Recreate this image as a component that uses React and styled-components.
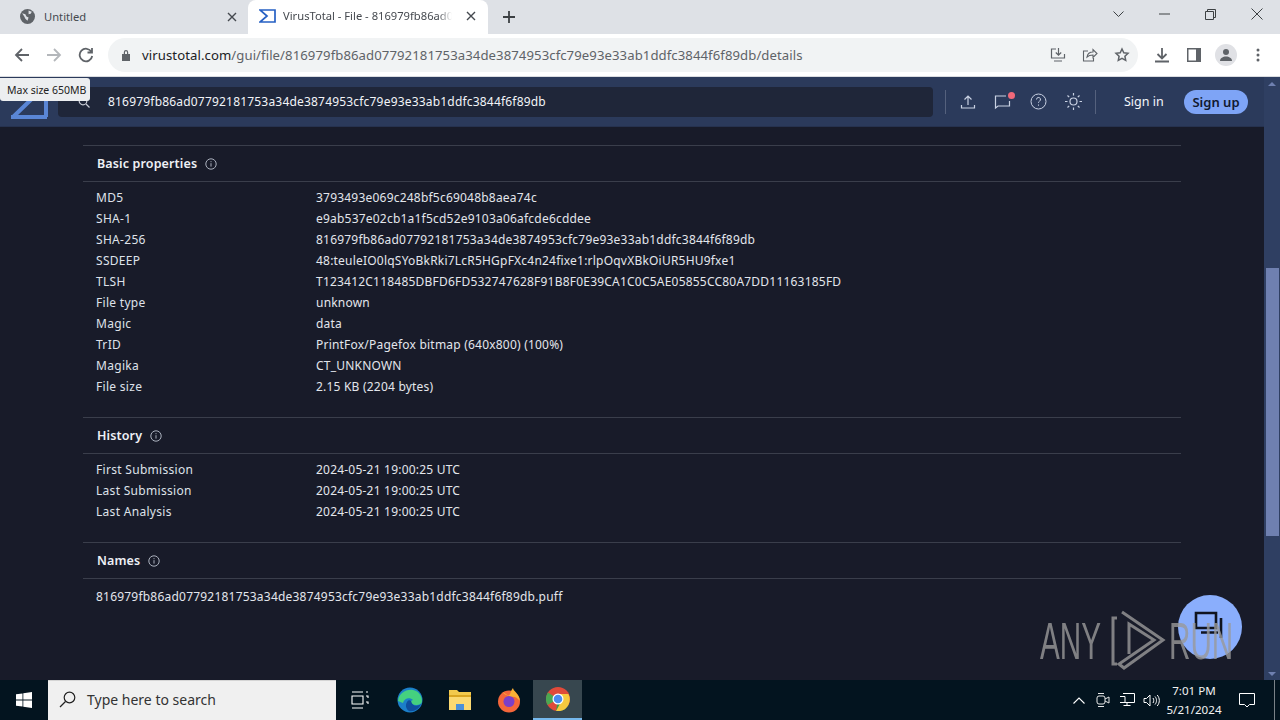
import React from 'react';
import styled, { createGlobalStyle } from 'styled-components';

const Global = createGlobalStyle`
  html, body { margin: 0; padding: 0; width: 1280px; height: 720px; overflow: hidden; background: #181b29; }
  * { box-sizing: border-box; }
`;
const Screen = styled.div`
  position: relative; width: 1280px; height: 720px; display: flex; flex-direction: column; overflow: hidden;
  font-family: "Noto Sans", sans-serif;
`;
const TabStrip = styled.div`
  height: 34px; background: #dee1e6; display: flex; align-items: flex-end; padding-left: 8px; flex: none;
`;
const Tab = styled.div`
  width: ${p => p.$w}px; height: ${p => p.$active ? 34 : 32}px; display: flex; align-items: center; gap: ${p => p.$gap}px; padding: 0 ${p => p.$pr}px 3px ${p => p.$pl}px;
  background: ${p => p.$active ? '#fff' : 'transparent'}; border-radius: 8px 8px 0 0; color: #45494f; font-size: 11.2px;
  margin-right: ${p => p.$mr || 0}px;
`;
const TabTitle = styled.span`
  flex: 1; white-space: nowrap; overflow: hidden;
  ${p => p.$fade && `
    -webkit-mask-image: linear-gradient(90deg, #000 88%, transparent 96%);
    mask-image: linear-gradient(90deg, #000 88%, transparent 96%);
  `}
`;
const StripSpacer = styled.div`flex: 1;`;
const WinControls = styled.div`
  display: flex; align-items: center; height: 34px; color: #3c4043; padding-right: 17px; gap: 35px; padding-bottom: 6px;
`;
const NewTab = styled.div`
  height: 32px; display: flex; align-items: center; margin-left: 14px; padding-bottom: 2px; color: #3c4043;
`;
const Toolbar = styled.div`
  height: 43px; background: #fff; display: flex; align-items: center; padding: 0 0 0 12px; flex: none; border-bottom: 1px solid #dadce0;
`;
const NavBtn = styled.div`
  width: ${p => p.$w || 32}px; display: flex; justify-content: center; align-items: center; color: ${p => p.$c || '#5f6368'}; flex: none;
`;
const Omnibox = styled.div`
  width: 1030px; margin-left: 12px; height: 34px; border-radius: 17px; background: #f1f3f4; display: flex; align-items: center; padding: 0 8px 0 13px; font-size: 13.15px; color: #5f6368; white-space: nowrap; flex: none;
`;
const Url = styled.span`
  flex: 1; margin-left: 11px; letter-spacing: .08px;
  b { font-weight: 400; color: #202124; }
`;
const OmniIcons = styled.div`display: flex; gap: 16px; align-items: center; color: #5f6368;`;
const ToolIcons = styled.div`display: flex; align-items: center; margin-left: 8px;`;
const Avatar = styled.div`
  width: 22px; height: 22px; border-radius: 50%; background: #e0e1e5; display: flex; align-items: center; justify-content: center; overflow: hidden;
`;

const Page = styled.div`flex: 1; display: flex; min-height: 0; position: relative;`;
const PageCol = styled.div`flex: 1; display: flex; flex-direction: column; min-width: 0;`;
const Header = styled.div`
  height: 50px; background: #2b3a5b; display: flex; align-items: center; padding: 0 15px 0 58px; flex: none; border-bottom: 1px solid #26324f;
`;
const SearchBox = styled.div`
  width: 875px; flex: none; height: 30px; background: #1f2639; border-radius: 4px; display: flex; align-items: center; padding-left: 50px; color: #f2f4f8; font-size: 12px; letter-spacing: .19px; position: relative;
`;
const SearchGlass = styled.svg`position: absolute; left: 20px; top: 9px;`;
const HDivider = styled.div`width: 1px; height: 24px; background: #55617d; flex: none; margin: ${p => p.$m};`;
const HIcons = styled.div`display: flex; align-items: center; gap: 13px; flex: none;`;
const HIcon = styled.div`width: 22px; height: 22px; display: flex; align-items: center; justify-content: center; color: #c9d1e3; position: relative;`;
const Dot = styled.span`position: absolute; top: 1px; right: -1px; width: 7px; height: 7px; border-radius: 50%; background: #f0697a;`;
const SignIn = styled.div`color: #f4f6fb; font-size: 12.5px; width: 38px; margin-right: 22px; white-space: nowrap; flex: none;`;
const SignUp = styled.div`
  width: 64px; height: 24px; border-radius: 12px; background: #7ea4f6; color: #111a30; font-size: 13px; font-weight: 600; display: flex; align-items: center; justify-content: center; flex: none;
`;
const Main = styled.div`
  flex: 1; background: #181b29; padding: 18px 83px 0; border-right: 0; display: flex; flex-direction: column; min-height: 0;
`;
const Section = styled.section`
  width: 1098px; border-top: 1px solid #3a3e4b; margin-bottom: ${p => p.$mb}px;
`;
const SectionHead = styled.div`
  height: 36px; display: flex; align-items: center; padding-left: 14px; gap: 8px; border-bottom: 1px solid #3a3e4b; color: #eef0f5; font-size: 12.5px; font-weight: 600; letter-spacing: .13px;
`;
const Rows = styled.div`padding-top: ${p => p.$pt || 5}px;`;
const Row = styled.div`
  height: 21px; display: flex; align-items: center; padding-left: 13px; font-size: 12px; color: #e3e6ec; white-space: nowrap; letter-spacing: .21px;
`;
const Key = styled.span`width: 220px; flex: none; color: #dfe2e9; letter-spacing: .3px;`;
const Scrollbar = styled.div`
  width: 16px; background: #2f3f62; flex: none; display: flex; flex-direction: column; align-items: center; justify-content: space-between; padding: 5px 0 4px; position: relative;
`;
const Thumb = styled.div`
  position: absolute; top: 191px; left: 2px; width: 13px; height: 268px; background: #6f80b0;
`;
const Arrow = styled.div`
  width: 0; height: 0; border-left: 4px solid transparent; border-right: 4px solid transparent;
  ${p => p.$up ? 'border-bottom: 4px solid #6f80b0;' : 'border-top: 4px solid #6f80b0;'}
`;
const Taskbar = styled.div`
  height: 40px; background: #03141f; display: flex; align-items: center; flex: none; color: #fff;
`;
const StartBtn = styled.div`width: 48px; display: flex; justify-content: center; align-items: center;`;
const SearchBar = styled.div`
  width: 288px; height: 40px; background: #f0f0f0; border-top: 1px solid #d4d4d4; display: flex; align-items: center; padding: 0 0 2px 11px; gap: 11px; color: #333; font-size: 14px;
`;
const TaskIcons = styled.div`display: flex; align-items: center; height: 40px;`;
const TaskIcon = styled.div`
  width: ${p => p.$w || 49}px; height: 40px; display: flex; align-items: center; justify-content: center;
  ${p => p.$active && 'background: #37474f; border-bottom: 2px solid #76b9ed;'}
`;
const Tray = styled.div`margin-left: auto; margin-right: 5px; display: flex; align-items: center; height: 40px; color: #fff;`;
const TrayIcon = styled.div`width: ${p => p.$w || 24}px; display: flex; justify-content: center;`;
const Clock = styled.div`
  width: 62px; text-align: center; font-size: 11.6px; line-height: 19px; color: #f2f2f2; white-space: nowrap;
  display: flex; flex-direction: column; align-items: center;
`;
const Notif = styled.div`width: 50px; display: flex; justify-content: center; padding-right: 6px; border-right: 1px solid #7a8288; height: 40px; align-items: center;`;

const Tooltip = styled.div`
  position: absolute; left: 0; top: 78px; width: 90px; height: 23px; background: #eceef0; border-radius: 0 3px 3px 3px; color: #222; font-size: 10.5px; display: flex; align-items: center; padding-left: 7px; white-space: nowrap; z-index: 5;
`;
const Logo = styled.svg`position: absolute; left: 10px; top: 88px;`;
const ChatFab = styled.div`
  position: absolute; left: 1178px; top: 595px; width: 64px; height: 64px; border-radius: 50%; background: #8aaefc; display: flex; align-items: center; justify-content: center; color: #10141f;
`;
const Watermark = styled.div`
  position: absolute; left: 1040px; top: 608px; height: 66px; display: flex; align-items: center; color: #9a9a9a; opacity: .8; font-family: "Liberation Sans", sans-serif; font-size: 52px; line-height: 66px; z-index: 6;
`;
const WmText = styled.span`display: inline-block; transform: scaleX(.57); transform-origin: left center; width: ${p => p.$w}px; white-space: nowrap; margin-right: ${p => p.$mr || 0}px;`;

const Info = () => (
  <svg width="12" height="12" viewBox="0 0 12 12" fill="none" stroke="#aab0bd" strokeWidth="1"><circle cx="6" cy="6" r="5.2"/><path d="M6 5.2v3.4M6 3.2v1"/></svg>
);

const VTMark = () => (
  <svg width="17" height="14" viewBox="0 0 17 14" fill="none" stroke="#2660c4" strokeWidth="1.7"><path d="M1 1h15v12H1l7-6z"/></svg>
);

const basic = [
  ['MD5', '3793493e069c248bf5c69048b8aea74c'],
  ['SHA-1', 'e9ab537e02cb1a1f5cd52e9103a06afcde6cddee'],
  ['SHA-256', '816979fb86ad07792181753a34de3874953cfc79e93e33ab1ddfc3844f6f89db'],
  ['SSDEEP', '48:teuleIO0lqSYoBkRki7LcR5HGpFXc4n24fixe1:rlpOqvXBkOiUR5HU9fxe1'],
  ['TLSH', 'T123412C118485DBFD6FD532747628F91B8F0E39CA1C0C5AE05855CC80A7DD11163185FD'],
  ['File type', 'unknown'],
  ['Magic', 'data'],
  ['TrID', 'PrintFox/Pagefox bitmap (640x800) (100%)'],
  ['Magika', 'CT_UNKNOWN'],
  ['File size', '2.15 KB (2204 bytes)'],
];
const history = [
  ['First Submission', '2024-05-21 19:00:25 UTC'],
  ['Last Submission', '2024-05-21 19:00:25 UTC'],
  ['Last Analysis', '2024-05-21 19:00:25 UTC'],
];
const KV = ({ items }) => (
  <Rows>{items.map(([k, v]) => <Row key={k}><Key>{k}</Key><span>{v}</span></Row>)}</Rows>
);

export default function App() {
  return (
    <Screen>
      <Global />
      <TabStrip>
        <Tab $w={240} $mr={0} $gap={9} $pl={12} $pr={11}>
          <svg width="15" height="15" viewBox="0 0 14 14"><circle cx="7" cy="7" r="7" fill="#5f6368"/><path d="M2 4l3 1 1 2 2 1-1 3-2-2-1-2zM8 1.500l3 1-1 2-2 .5z" fill="#dee1e6"/></svg>
          <TabTitle>Untitled</TabTitle>
          <svg width="10" height="10" viewBox="0 0 10 10" stroke="#45494f" strokeWidth="1.4"><path d="M1 1l8 8M9 1l-8 8"/></svg>
        </Tab>
        <Tab $w={240} $active $gap={7} $pl={11} $pr={12}>
          <VTMark />
          <TabTitle $fade>VirusTotal - File - 816979fb86ad0</TabTitle>
          <svg width="10" height="10" viewBox="0 0 10 10" stroke="#45494f" strokeWidth="1.4"><path d="M1 1l8 8M9 1l-8 8"/></svg>
        </Tab>
        <NewTab>
          <svg width="14" height="14" viewBox="0 0 14 14" stroke="#3c4043" strokeWidth="1.8"><path d="M7 1v12M1 7h12"/></svg>
        </NewTab>
        <StripSpacer />
        <WinControls>
          <svg width="11" height="7" viewBox="0 0 11 7" fill="none" stroke="#3c4043"><path d="M.5.5l5 5 5-5"/></svg>
          <svg width="11" height="2" viewBox="0 0 11 2" stroke="#3c4043"><path d="M0 1h11"/></svg>
          <svg width="11" height="11" viewBox="0 0 11 11" fill="none" stroke="#3c4043"><path d="M.5 2.500h8v8h-8zM2.500 2.500v-2h8v8h-2"/></svg>
          <svg width="12" height="12" viewBox="0 0 12 12" stroke="#3c4043"><path d="M.5.5l11 11M11.500.5l-11 11"/></svg>
        </WinControls>
      </TabStrip>
      <Toolbar>
        <NavBtn $w={20}>
          <svg width="16" height="16" viewBox="0 0 16 16" fill="none" stroke="#5f6368" strokeWidth="1.8"><path d="M15 8H2M8 2L2 8l6 6"/></svg>
        </NavBtn>
        <NavBtn $w={44}>
          <svg width="16" height="16" viewBox="0 0 16 16" fill="none" stroke="#b4b7bb" strokeWidth="1.8"><path d="M1 8h13M8 2l6 6-6 6"/></svg>
        </NavBtn>
        <NavBtn $w={20}>
          <svg width="16" height="16" viewBox="0 0 16 16" fill="none" stroke="#5f6368" strokeWidth="1.8"><path d="M13.500 5A6.300 6.300 0 1 0 14.200 9M14 1v4.500H9.500"/></svg>
        </NavBtn>
        <Omnibox>
          <svg width="10" height="12" viewBox="0 0 10 12" fill="#5f6368"><path d="M1 5h8v7H1zM2.800 5V3.200a2.200 2.200 0 0 1 4.400 0V5H6V3.200a1 1 0 0 0-2 0V5z"/></svg>
          <Url><b>virustotal.com</b>/gui/file/816979fb86ad07792181753a34de3874953cfc79e93e33ab1ddfc3844f6f89db/details</Url>
          <OmniIcons>
            <svg width="16" height="16" viewBox="0 0 16 16" fill="none" stroke="#5f6368" strokeWidth="1.2"><path d="M6 2H1.500v9h13V7M8.500 1v7M5.800 5.500l2.700 2.700 2.700-2.700M4 14h8"/></svg>
            <svg width="16" height="16" viewBox="0 0 16 16" fill="none" stroke="#5f6368" strokeWidth="1.1"><path d="M6 4H1.500v10h10v-3M5 10c.5-3 3-5 6-5V2.500l4 4-4 4V8c-2.500 0-4.500.5-6 2z"/></svg>
            <svg width="16" height="16" viewBox="0 0 16 16" fill="none" stroke="#5f6368" strokeWidth="1.5"><path d="M8 2l1.800 3.800 4.200.5-3.100 2.900.8 4.100L8 11.300l-3.700 2 .8-4.100L2 6.300l4.200-.5z"/></svg>
          </OmniIcons>
        </Omnibox>
        <ToolIcons>
          <NavBtn $w={32}>
            <svg width="16" height="16" viewBox="0 0 16 16" fill="none" stroke="#5f6368" strokeWidth="1.8"><path d="M8 1v10M3.500 7L8 11.500 12.500 7M1 14.500h14"/></svg>
          </NavBtn>
          <NavBtn $w={32}>
            <svg width="14" height="14" viewBox="0 0 14 14"><rect width="14" height="14" fill="#5f6368"/><rect x="1.500" y="1.500" width="7.500" height="11" fill="#fff"/></svg>
          </NavBtn>
          <NavBtn $w={32}>
            <Avatar><svg width="14" height="14" viewBox="0 0 14 14" fill="#5f6368"><circle cx="7" cy="4" r="3"/><path d="M1 13c0-3 3-4.500 6-4.500s6 1.500 6 4.500z"/></svg></Avatar>
          </NavBtn>
          <NavBtn $w={32}>
            <svg width="4" height="14" viewBox="0 0 4 14" fill="#5f6368"><circle cx="2" cy="2" r="1.500"/><circle cx="2" cy="7" r="1.500"/><circle cx="2" cy="12" r="1.500"/></svg>
          </NavBtn>
        </ToolIcons>
      </Toolbar>
      <Page>
        <PageCol>
          <Header>
            <SearchBox>
              <SearchGlass width="12" height="12" viewBox="0 0 12 12" fill="none" stroke="#c8ccd6" strokeWidth="1.2"><circle cx="5" cy="5" r="3.800"/><path d="M8 8l3.500 3.500"/></SearchGlass>
              816979fb86ad07792181753a34de3874953cfc79e93e33ab1ddfc3844f6f89db
            </SearchBox>
            <HDivider $m="0 11px 0 12px" />
            <HIcons>
              <HIcon><svg width="16" height="16" viewBox="0 0 16 16" fill="none" stroke="#c9d1e3" strokeWidth="1.2"><path d="M8 11V2M4.500 5.500L8 2l3.500 3.500M1.500 11v3h13v-3"/></svg></HIcon>
              <HIcon><Dot /><svg width="18" height="18" viewBox="0 0 18 18" fill="none" stroke="#c9d1e3" strokeWidth="1.200"><path d="M12 3H1.500v12l2.500-2h11.500V8"/></svg></HIcon>
              <HIcon><svg width="17" height="17" viewBox="0 0 17 17" fill="none" stroke="#c9d1e3" strokeWidth="1"><circle cx="8.500" cy="8.500" r="7.500"/><path d="M6.500 6.500a2 2 0 1 1 3 1.700c-.7.4-1 .8-1 1.600M8.500 11.500v1.200"/></svg></HIcon>
              <HIcon><svg width="19" height="19" viewBox="0 0 19 19" fill="none" stroke="#c9d1e3" strokeWidth="1.200"><circle cx="9.500" cy="9.500" r="3.500"/><path d="M9.500 1v2.500M9.500 15.500V18M1 9.500h2.500M15.500 9.500H18M3.500 3.500l1.700 1.700M13.800 13.800l1.700 1.700M3.500 15.500l1.700-1.700M13.800 5.200l1.700-1.700"/></svg></HIcon>
            </HIcons>
            <HDivider $m="0 28px 0 11px" />
            <SignIn>Sign in</SignIn>
            <SignUp>Sign up</SignUp>
          </Header>
          <Main>
            <Section $mb={20}>
              <SectionHead>Basic properties <Info /></SectionHead>
              <KV items={basic} />
            </Section>
            <Section $mb={20}>
              <SectionHead>History <Info /></SectionHead>
              <KV items={history} />
            </Section>
            <Section $mb={0}>
              <SectionHead>Names <Info /></SectionHead>
              <Rows $pt={7}><Row>816979fb86ad07792181753a34de3874953cfc79e93e33ab1ddfc3844f6f89db.puff</Row></Rows>
            </Section>
          </Main>
        </PageCol>
        <Scrollbar>
          <Arrow $up />
          <Thumb />
          <Arrow />
        </Scrollbar>
      </Page>
      <Taskbar>
        <StartBtn>
          <svg width="16" height="16" viewBox="0 0 16 16" fill="#fff"><path d="M0 2.300l6.500-.9v6.200H0zM7.300 1.300L16 0v7.600H7.300zM0 8.400h6.500v6.200L0 13.700zM7.300 8.400H16V16l-8.700-1.200z"/></svg>
        </StartBtn>
        <SearchBar>
          <svg width="17" height="17" viewBox="0 0 17 17" fill="none" stroke="#222" strokeWidth="1.200"><circle cx="10.500" cy="6.500" r="5.300"/><path d="M6.500 10.500L1 16"/></svg>
          Type here to search
        </SearchBar>
        <TaskIcons>
          <TaskIcon $w={48}>
            <svg width="18" height="18" viewBox="0 0 18 18" fill="none" stroke="#fff" strokeWidth="1.100"><path d="M1 1h11M1 17h11M1 5h11v8H1zM15 1h2M15 5h2v2M15 11h2v2"/></svg>
          </TaskIcon>
          <TaskIcon $w={51}>
            <svg width="26" height="26" viewBox="0 0 26 26"><circle cx="13" cy="13" r="12.500" fill="#1b7fc9"/><path d="M1 14C2 6 9 2 16 3c5 1 9 5 9 11 0 3-3 4-6 4-3 0-5-1-5-3 0-1 1-2 2-2-3-3-9-2-10 3z" fill="#45d17f"/><path d="M14 14c1 5 6 6 10 3-2 5-7 8-12 7-3-2-4-6-2-9 1-2 3-2 4-1z" fill="#0f4f9e"/></svg>
          </TaskIcon>
          <TaskIcon>
            <svg width="24" height="22" viewBox="0 0 24 22"><path d="M1 1h8l2 2h12v18H1z" fill="#f2c94c"/><path d="M1 6h22v15H1z" fill="#fbd971"/><path d="M8 15h8v6H8z" fill="#4a90d9"/><path d="M1 6h22v2H1z" fill="#d9a520"/></svg>
          </TaskIcon>
          <TaskIcon>
            <svg width="24" height="26" viewBox="0 0 24 26"><circle cx="12" cy="14.500" r="11" fill="#f4663a"/><path d="M6 5c1 3 3 2 5 4 3-1 2-5 5-8 0 3 6 5 7 13-3-4-6-5-10-4z" fill="#fbb034"/><circle cx="12" cy="14.500" r="5.500" fill="#7b3fc8"/></svg>
          </TaskIcon>
          <TaskIcon $active>
            <svg width="24" height="24" viewBox="0 0 24 24"><circle cx="12" cy="12" r="12" fill="#e04a3a"/><path d="M12 12L1.600 18A12 12 0 0 1 2 5.500z" fill="#4aa852"/><path d="M12 12l10.400 6A12 12 0 0 1 10 23.900z" fill="#3c9a49"/><path d="M12 7h10.400A12 12 0 0 1 22.400 18 12 12 0 0 1 10 23.900L15 15z" fill="#f7c93e"/><circle cx="12" cy="12" r="5.500" fill="#fff"/><circle cx="12" cy="12" r="4.300" fill="#4b8bf0"/></svg>
          </TaskIcon>
        </TaskIcons>
        <Tray>
          <TrayIcon>
            <svg width="12" height="7" viewBox="0 0 12 7" fill="none" stroke="#fff" strokeWidth="1.100"><path d="M.5 6.500L6 1l5.500 5.500"/></svg>
          </TrayIcon>
          <TrayIcon>
            <svg width="14" height="16" viewBox="0 0 14 16" fill="none" stroke="#e8e8e8"><rect x="1" y="4" width="8" height="8" rx="2"/><path d="M9 7l4-2v6l-4-2M2 1.500h6M2 14.500h6"/></svg>
          </TrayIcon>
          <TrayIcon>
            <svg width="16" height="14" viewBox="0 0 16 14" fill="none" stroke="#fff"><path d="M4 .5h11.500v9H1M1 3.500h5v6M8 9.500v3M4.500 12.500h7"/></svg>
          </TrayIcon>
          <TrayIcon>
            <svg width="17" height="13" viewBox="0 0 17 13" fill="none" stroke="#fff"><path d="M1 4.500h2.500L7 1v11L3.500 8.500H1zM10 4c1 1.500 1 3.500 0 5M12 2.500c2 2.300 2 5.700 0 8M14.200 1c2.800 3.200 2.800 7.800 0 11"/></svg>
          </TrayIcon>
          <Clock><span>7:01 PM</span><span>5/21/2024</span></Clock>
          <Notif>
            <svg width="16" height="15" viewBox="0 0 16 15" fill="none" stroke="#fff"><path d="M.5.500h15v11h-5L8 14l-2.500-2.500h-5z"/></svg>
          </Notif>
        </Tray>
      </Taskbar>

      <Logo width="40" height="32" viewBox="0 0 40 32" fill="none" stroke="#5a86d6" strokeWidth="4"><path d="M3 29L30 3M1 29h36M36 29V8"/></Logo>
      <Tooltip>Max size 650MB</Tooltip>
      <ChatFab>
        <svg width="36" height="36" viewBox="0 0 36 36" fill="none" stroke="#10141f" strokeWidth="2.600"><path d="M4 4h20v15H4zM29 9v20M9 23.500h17"/></svg>
      </ChatFab>
      <Watermark>
        <WmText $w={69}>ANY</WmText>
        <svg width="60" height="66" viewBox="0 0 60 66" fill="none" stroke="#9a9a9a" strokeWidth="3"><path d="M8 10H4v46h4M13 4l41 28-39 28-5-4 35-24-25-16v30"/></svg>
        <WmText $w={62}>RUN</WmText>
      </Watermark>
    </Screen>
  );
}
